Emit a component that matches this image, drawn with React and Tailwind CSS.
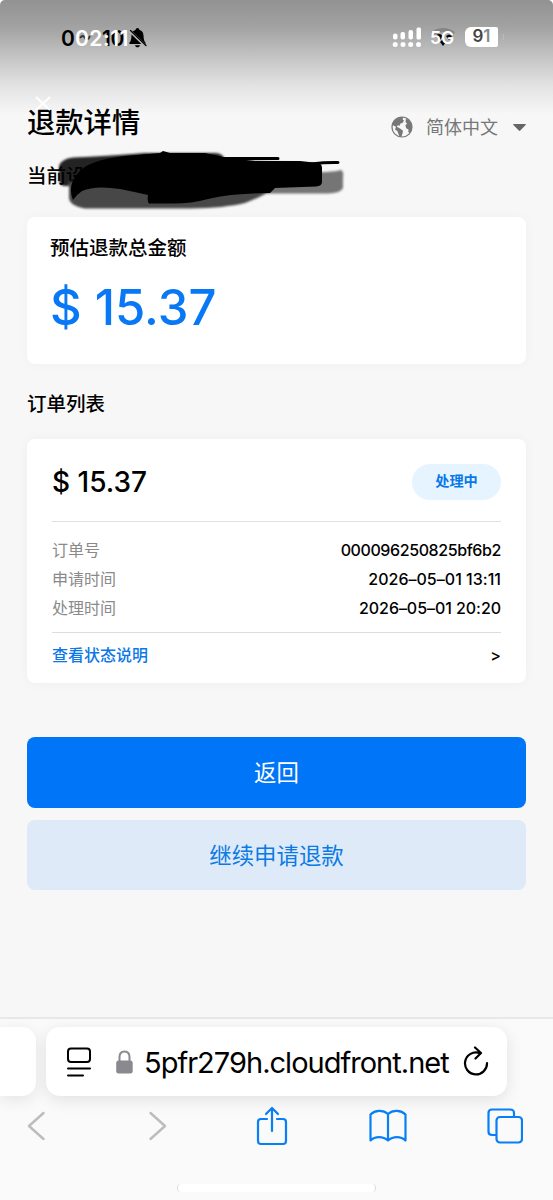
import React from 'react';

const rows = [
  { label: '订单号', value: '000096250825bf6b2', tracking: 'tracking-[-0.4px]' },
  { label: '申请时间', value: '2026–05–01 13:11', tracking: 'tracking-[0.02px]' },
  { label: '处理时间', value: '2026–05–01 20:20', tracking: 'tracking-[-0.05px]' },
];

const StatusBar = () => (
  <div className="relative h-[88px] shrink-0">
    <div className="absolute left-[61px] top-[26px] h-6 w-[90px] text-[21px] leading-6 font-semibold">
      <span className="absolute left-0 top-[1px] text-black">0</span>
      <span className="absolute left-[41px] top-[1px] tracking-[-0.5px] text-black">10</span>
      <svg className="absolute left-[18px] top-[8px]" width="12" height="6" viewBox="0 0 12 6" fill="none" stroke="#333" strokeWidth="1.800">
        <path d="M1 4q3-4 5 0t5-2" />
      </svg>
      <span className="absolute left-[14px] top-[1px] tracking-[0.5px] text-white">02:11</span>
      <svg className="absolute left-[67px] top-[1px]" width="20" height="21" viewBox="0 0 20 21">
        <path d="M2 17c-.8 0-1-.8-.4-1.400C3 14 3.300 12 3.500 8.500 3.700 5.200 5 3.700 7.500 3 7.800 1.800 8.500 1 9.500 1s1.700.8 2 2c2.500.7 3.800 2.200 4 5.500.2 3.500.5 5.500 1.900 7.100.6.600.4 1.400-.4 1.400Z M7 18.200h5c-.4 1.400-1.300 2-2.500 2S7.400 19.600 7 18.200Z" fill="black" />
        <path d="m1.500 3.500 16 15.500" stroke="#b5b5b5" strokeWidth="3" />
        <path d="m2.500 3.500 15.500 15" stroke="black" strokeWidth="1.300" strokeLinecap="round" />
      </svg>
    </div>
    <div className="absolute left-[392px] top-[25px] flex h-6 items-center">
      <svg width="30" height="21" viewBox="0 0 30 21" fill="white">
        <rect x="1" y="6.500" width="4.500" height="6" rx="2" />
        <rect x="8.500" y="5" width="4.500" height="7.500" rx="2" />
        <rect x="16.500" y="3" width="4.500" height="9.500" rx="2" />
        <rect x="24.500" y=".5" width="4.500" height="12" rx="1.500" />
        <circle cx="3.200" cy="17.500" r="2.500" />
        <circle cx="11" cy="17.500" r="2.500" />
        <circle cx="18.700" cy="17.500" r="2.500" />
        <circle cx="26.500" cy="17.500" r="2.500" />
      </svg>
      <div className="relative ml-[8px] h-6 w-7">
        <svg className="absolute left-0 top-[1px]" width="28" height="21" viewBox="0 0 28 21">
          <path d="M1 6Q13 -2 25 6L23 9Q13 3 4 9Z" fill="#858585" />
          <path d="M5 10q4-4 8 0l-3 4Zm11 0q4-3 6 0l-3 4Zm-6 6 3-3 3 3-3 4Z" fill="black" />
        </svg>
        <span className="absolute left-0 top-[1px] text-[17.5px] leading-6 font-semibold text-white">5G</span>
      </div>
      <div className="ml-[7px] flex h-[20px] w-[33px] items-center justify-center rounded-l-[6px] rounded-r-[2px] bg-white text-[17px] font-semibold text-[#888]">
        <span className="text-[#444]">9</span>1
      </div>
      <div className="ml-[5px] h-[6px] w-px bg-[#bbb]" />
    </div>
  </div>
);

const LanguagePicker = () => (
  <div className="flex h-[30px] items-center text-[#777]">
    <svg width="22" height="22" viewBox="0 0 22 22">
      <circle cx="11" cy="11" r="10" fill="none" stroke="#777" strokeWidth="1.200" />
      <path d="M3 4.500Q7 .8 12 1l-.3 2.500 1.300 1-1.500 2.500-2 .5-.8 2.200-2-.4-.8 1.700 2 .7 1.800 1.200 2.300 1.800-.4 2.300-1.100 3.700-1.800.2-1.300-3-.9-2.600-2.500-1.800L5 10.800 1.500 9Q1.500 6.500 3 4.500Z M15 2.500l2.500 1.200Q21 7 21 11.500 20.700 15 18.800 17.200l-1.500-1.200.2-2.500-2.300-1.300-.8-2.700 1.600-2-1.500-1.500Z" fill="#777" />
    </svg>
    <span className="ml-[13px] text-[18px]">简体中文</span>
    <svg className="ml-[15px]" width="13" height="7" viewBox="0 0 13 7">
      <path d="M.8 0h11.400c.6 0 .8.500.4 1L7.300 6.500c-.5.500-1 .5-1.500 0L.4 1C0 .5.200 0 .8 0Z" fill="#666" />
    </svg>
  </div>
);

/* hand-drawn marker strokes over the account line */
const Scribble = () => (
  <svg className="absolute left-[20px] top-[-14px]" width="310" height="66" viewBox="47 146 310 66">
    <defs>
      <filter id="soft"><feGaussianBlur stdDeviation="1.200" /></filter>
      <filter id="edge"><feGaussianBlur stdDeviation="0.7" /></filter>
    </defs>
    <g filter="url(#soft)">
      <path d="M59 166Q61 159 73 157.500Q105 156 145 153L215 153Q223 153 225 160L320 164V186H64Q59 185 59 179Z" fill="black" fillOpacity=".86" />
      <path d="M69 182H286Q262 197 245 203Q225 208 190 208.500H85Q70 206 69 198Z" fill="#464646" />
      <path d="M255 172Q330 174 341 170Q344 171 343 178V188Q341 193 328 193.500H265Z" fill="#757575" />
    </g>
    <g filter="url(#edge)">
      <path d="M78 173Q88 160 125 156L160 153 163 151 170 153H205L228 158 255 161H300L318 163Q322 164 322 168V182Q322 186 316 186.500L275 188 270 193Q232 193 208 199Q190 204 170 203.500H149Q147 202 148 195Q135 192 120 189Q95 185 82 191Q76 195 73 200Q67 186 78 173Z" fill="black" />
      <path d="M218 158.500H278M285 168Q315 162 338 162.500" fill="none" stroke="black" strokeWidth="3" strokeLinecap="round" />
    </g>
  </svg>
);

const BrowserBar = () => (
  <footer className="mt-auto flex h-[183px] shrink-0 flex-col border-t-2 border-[#e8e8e8] bg-[#fafafa]">
    <div className="mt-[8px] flex h-[69px] gap-[10px] overflow-visible">
      <div className="w-[36px] rounded-r-[14px] bg-white shadow-[0_4px_16px_rgba(0,0,0,0.09)]" />
      <div className="flex w-[461px] items-center rounded-[14px] bg-white pl-[20px] shadow-[0_4px_16px_rgba(0,0,0,0.1)]">
        <svg width="26" height="30" viewBox="0 0 26 30" fill="none" stroke="black" strokeWidth="2" strokeLinecap="round">
          <rect x="2" y="1.500" width="22" height="13.500" rx="3" />
          <path d="M2 21.500h22M2 28.500h15" />
        </svg>
        <svg className="ml-[23px]" width="19" height="24" viewBox="0 0 19 24">
          <path d="M4.500 11V7c0-3.600 2-5.500 5-5.500s5 1.900 5 5.500v4" fill="none" stroke="#8a8990" strokeWidth="2" />
          <rect x="1.200" y="10.500" width="16.500" height="13" rx="2.500" fill="#8a8990" />
        </svg>
        <span className="ml-[10px] w-[306px] shrink-0 pt-[1px] text-[29px] leading-none tracking-[-0.98px] whitespace-nowrap text-black">5pfr279h.cloudfront.net</span>
        <svg className="ml-[12px] shrink-0" width="28" height="32" viewBox="0 0 28 32" fill="none" stroke="black" strokeWidth="2.200" strokeLinecap="round" strokeLinejoin="round">
          <path d="M17.500 7A11 11 0 1 0 25 17M13 1.500l6 5.500-5.500 5.500" />
        </svg>
      </div>
    </div>
    <div className="mt-[5px] flex h-[50px] items-center pl-[26px]">
      <svg width="20" height="30" viewBox="0 0 20 30" fill="none" stroke="#bdbdbd" strokeWidth="2.500" strokeLinecap="round" strokeLinejoin="round"><path d="M17.500 2 3 15l14.500 13" /></svg>
      <svg className="ml-[102px]" width="20" height="30" viewBox="0 0 20 30" fill="none" stroke="#bdbdbd" strokeWidth="2.500" strokeLinecap="round" strokeLinejoin="round"><path d="m2.500 2 14.500 13L2.500 28" /></svg>
      <svg className="ml-[88px]" width="32" height="40" viewBox="0 0 32 40" fill="none" stroke="#087ff5" strokeWidth="2.200" strokeLinecap="round" strokeLinejoin="round">
        <path d="M11 13H5c-2 0-3 1-3 3v19c0 2 1 3 3 3h22c2 0 3-1 3-3V16c0-2-1-3-3-3h-6M16 25V2M10 8l6-6 6 6" />
      </svg>
      <svg className="ml-[81px]" width="38" height="34" viewBox="0 0 38 34" fill="none" stroke="#087ff5" strokeWidth="2.200" strokeLinejoin="round">
        <path d="M19 5C14 .5 6 1 1.500 5.500v26C6 27 14 27 19 31.500 24 27 32 27 36.500 31.500v-26C32 1 24 .5 19 5Zm0 0v26.500" />
      </svg>
      <svg className="ml-[80px]" width="36" height="36" viewBox="0 0 36 36" fill="none" stroke="#087ff5" strokeWidth="2.200">
        <path d="M9.500 27H5c-2.500 0-3.500-1-3.500-3.500V5C1.500 2.500 2.500 1.500 5 1.500h18C25.500 1.500 27 2.500 27 5v4" />
        <rect x="9.500" y="9" width="25.500" height="25.500" rx="3.500" />
      </svg>
    </div>
    <div className="mt-[33px] ml-[177px] h-[8px] w-[199px] shrink-0 rounded-full border-x border-[#ddd] bg-white" />
  </footer>
);

const App = () => {
  return (
    <div className="flex h-[1200px] w-[553px] flex-col overflow-hidden rounded-t-[5px] bg-[#f7f7f7] bg-[linear-gradient(180deg,#929292_0px,#a3a3a3_28px,#c5c5c5_58px,#e2e2e2_85px,#f7f7f7_114px)] font-['Inter','Noto_Sans_CJK_SC',sans-serif] text-black">
      <StatusBar />
      <main className="flex flex-col px-[27px]">
        <header className="relative flex h-[68px] items-center justify-between">
          <h1 className="mt-[2px] text-[28.300px] font-medium">退款详情</h1>
          <svg className="absolute left-[8px] top-[8px]" width="16" height="15" viewBox="0 0 16 15" stroke="white" strokeWidth="2">
            <path d="m1 1 14 13M15 1 1 14" />
          </svg>
          <div className="mt-[10px]">
            <LanguagePicker />
          </div>
        </header>
        <div className="relative mt-[4px] h-[32px] text-[19.5px] leading-[32px] font-medium">
          当前设
          <Scribble />
        </div>

        <section className="mt-[25px] flex h-[147px] flex-col rounded-[8px] bg-white px-[23px] shadow-[0_0_12px_rgba(0,0,0,0.03)]">
          <h2 className="mt-[16px] text-[19.5px] leading-[30px] font-medium">预估退款总金额</h2>
          <p className="mt-[15px] text-[49px] leading-[60px] font-medium text-[#0878f5]">$ 15.37</p>
        </section>

        <h2 className="mt-[25px] h-[30px] text-[19.5px] leading-[30px] font-medium">订单列表</h2>

        <section className="mt-[20px] flex h-[244px] flex-col rounded-[8px] bg-white px-[25px] shadow-[0_0_12px_rgba(0,0,0,0.04)]">
          <div className="flex h-[83px] items-center justify-between border-b-[1.500px] border-[#e0e0e0] pt-[3px]">
            <span className="text-[28px] font-medium">$ 15.37</span>
            <span className="flex h-[36px] w-[89px] items-center justify-center rounded-full bg-[#e6f4ff] pb-[1px] text-[14.200px] font-semibold text-[#0a78e8]">处理中</span>
          </div>
          <dl className="flex h-[111px] flex-col border-b border-[#ddd] pt-[13px]">
            {rows.map((row) => (
              <div key={row.label} className="flex h-[29px] items-center justify-between text-[16px]">
                <dt className="text-[#8a8a8a]">{row.label}</dt>
                <dd className={`font-medium ${row.tracking}`}>{row.value}</dd>
              </div>
            ))}
          </dl>
          <a className="flex h-[43px] items-center justify-between text-[16px] font-medium text-[#0a78e8]">
            查看状态说明
            <span className="text-black">&gt;</span>
          </a>
        </section>

        <div className="mt-[54px] flex flex-col gap-[12px]">
          <button className="h-[71px] rounded-[8px] bg-[#0075f7] pt-[1px] text-[22.400px] text-white">返回</button>
          <button className="h-[70px] rounded-[8px] bg-[#dfeaf8] pt-[2px] text-[22.400px] text-[#0a7ae6]">继续申请退款</button>
        </div>
      </main>
      <BrowserBar />
    </div>
  );
};

export default App;
